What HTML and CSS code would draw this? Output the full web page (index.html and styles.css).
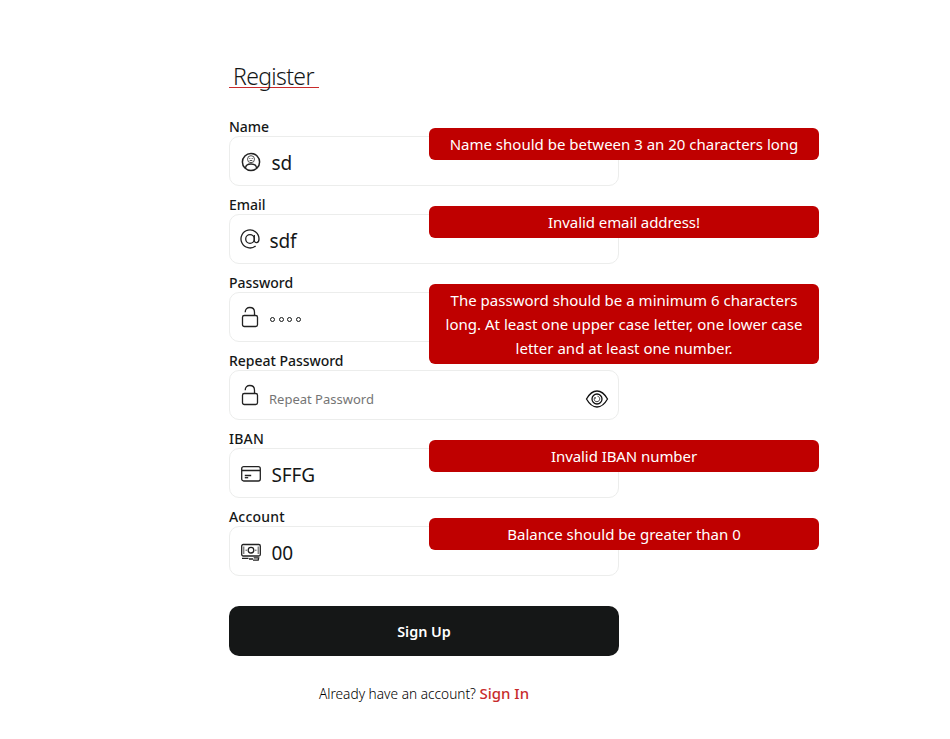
FILE: index.html
```html
<!DOCTYPE html>
<html lang="en">
<head>
<meta charset="utf-8">
<title>Register</title>
<link rel="stylesheet" href="styles.css">
</head>
<body>
<form class="form">
  <h1 class="title">Register</h1>
  <div class="field">
    <label class="label">Name</label>
    <div class="box">
      <svg class="icon user" width="20" height="20" viewBox="0 0 20 20"><circle class="ring" cx="10" cy="10" r="8.6"/><circle class="fine" cx="10" cy="7.200" r="3.500"/><path d="M4.500 16c.2-3 2.500-4 5.500-4s5.300 1 5.500 4"/><path class="fine" d="M8.300 6.500h1M10.700 6.500h1M8.700 8.500h2.600"/></svg>
      <span class="value">sd</span>
    </div>
    <div class="error">Name should be between 3 an 20 characters long</div>
  </div>
  <div class="field">
    <label class="label email">Email</label>
    <div class="box">
      <svg class="icon at" width="20" height="20" viewBox="0 0 20 20"><circle cx="10" cy="10" r="4.300"/><path d="M14.300 6v5.200c0 3.500 4.700 3.500 4.700-1.200a9 9 0 1 0-3.400 7"/></svg>
      <span class="value">sdf</span>
    </div>
    <div class="error short">Invalid email address!</div>
  </div>
  <div class="field">
    <label class="label">Password</label>
    <div class="box">
      <svg class="icon lock" width="20" height="22" viewBox="0 0 20 22"><rect x="2.500" y="9.500" width="15" height="11" rx="1.800"/><path d="M5.200 6.200C5.200 3.300 7.200 1.500 9.800 1.500s4.700 1.800 4.700 4.700v3.300"/></svg>
      <span class="dots"><i></i><i></i><i></i><i></i></span>
    </div>
    <div class="error long">The password should be a minimum 6 characters<br>long. At least one upper case letter, one lower case<br>letter and at least one number.</div>
  </div>
  <div class="field">
    <label class="label">Repeat Password</label>
    <div class="box">
      <svg class="icon lock" width="20" height="22" viewBox="0 0 20 22"><rect x="2.500" y="9.500" width="15" height="11" rx="1.800"/><path d="M5.200 6.200C5.200 3.300 7.200 1.500 9.800 1.500s4.700 1.800 4.700 4.700v3.300"/></svg>
      <span class="placeholder">Repeat Password</span>
      <svg class="eye" width="24" height="20" viewBox="0 0 24 20"><path d="M1.500 10Q6 2 12 2t10.500 8Q18 18 12 18T1.500 10z"/><circle cx="12" cy="10" r="5"/><path class="fine" d="M12.500 7.200c3.300.8 2.800 5.300-.5 5.500-3 0-3.500-3.200-1.800-4.500v1.600"/></svg>
    </div>
  </div>
  <div class="field">
    <label class="label iban">IBAN</label>
    <div class="box">
      <svg class="icon card" width="20" height="20" viewBox="0 0 20 20"><rect x=".7" y="2.700" width="18.600" height="14.300" rx="2"/><path d="M1 6.500h18M3.800 11.500h6.400"/><path d="M3.800 13.700h3.400"/></svg>
      <span class="value">SFFG</span>
    </div>
    <div class="error short">Invalid IBAN number</div>
  </div>
  <div class="field">
    <label class="label account">Account</label>
    <div class="box">
      <svg class="icon cash" width="20" height="20" viewBox="0 0 20 20"><rect x=".7" y="2.500" width="18.600" height="11.500" rx="1.500"/><path class="fine" d="M2.800 4.500v7.500M17.200 4.500v7.500M4.500 8.200H6M14 8.200h1.500"/><path d="M1 16.300h6.500M8 17h4M12 18.200h5.200l.5-2.400h-5"/><circle cx="10" cy="8.200" r="2.800"/></svg>
      <span class="value">00</span>
    </div>
    <div class="error">Balance should be greater than 0</div>
  </div>
  <button class="submit" type="button">Sign Up</button>
  <p class="footer"><span class="prompt">Already have an account?</span> <a class="signin">Sign In</a></p>
</form>
</body>
</html>
```
FILE: styles.css
```css
* { box-sizing: border-box; }
body {
  margin: 0;
  background: #fff;
  color: #151717;
  font-family: "Noto Sans", "Open Sans", sans-serif;
  font-size: 15px;
}
.form { width: 390px; margin: 60px 0 0 229px; display: flex; flex-direction: column; }
.title {
  align-self: flex-start;
  width: 90px;
  height: 28px;
  margin: 0 0 29px;
  padding-left: 4px;
  border-bottom: 1px solid #c82b2b;
  font-size: 23px;
  font-weight: 300;
  letter-spacing: -.65px;
  line-height: 32px;
  white-space: nowrap;
}
.field { position: relative; height: 69px; margin-bottom: 9px; }
.label { display: block; height: 19px; font-size: 14px; font-weight: 500; line-height: 20px; letter-spacing: -.03px; }
.account, .iban { letter-spacing: .2px; }
.box {
  display: flex;
  align-items: center;
  height: 50px;
  padding: 0 10px;
  border: 1px solid #ecedec;
  border-radius: 10px;
}
.icon { flex: none; fill: none; stroke: #222; stroke-width: 1.3; margin-right: 9px; }
.user, .card, .cash { margin-left: 1px; margin-right: 10.5px; margin-top: 2px; }
.ring { stroke-width: 1.5; }
.fine { stroke-width: .8; }
.at { margin-right: 9.5px; }
.value { font-size: 19px; font-weight: 400; line-height: 26px; padding-top: 4px; letter-spacing: -.1px; }
.placeholder { flex: 1; color: #757575; font-size: 13px; padding-top: 8px; line-height: 18px; }
.dots { display: flex; gap: 3.7px; padding-top: 5px; margin-left: 1px; }
.dots i { width: 5px; height: 5px; border: 1px solid #151717; border-radius: 50%; }
.eye { flex: none; fill: none; stroke: #111; stroke-width: 1.3; margin: 8px -1px 0 0; }
.error {
  position: absolute;
  z-index: 1;
  top: 11px;
  left: 200px;
  width: 390px;
  padding: 4px 0;
  border-radius: 6px;
  background: #bf0000;
  color: #fff;
  line-height: 24px;
  text-align: center;
  white-space: nowrap;
}
.short { letter-spacing: -.07px; }
.long { letter-spacing: .02px; }
.submit {
  height: 50px;
  margin-top: 21px;
  padding: 1px 0 0;
  border: 0;
  border-radius: 10px;
  background: #151717;
  color: #fff;
  font: 600 14.4px/49px "Noto Sans", sans-serif;
}
.footer { margin: 25px 0 0; font-size: 13.7px; line-height: 24px; text-align: center; white-space: nowrap; }
.prompt { font-weight: 300; color: #000; }
.signin { color: #c82b2b; font-size: 15px; font-weight: 500; }
```
